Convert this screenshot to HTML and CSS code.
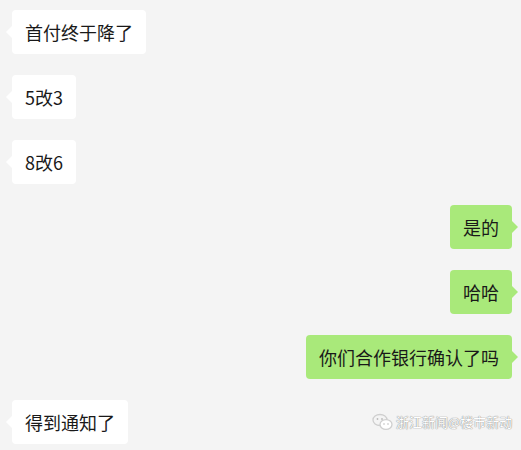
FILE: index.html
```html
<!DOCTYPE html>
<html lang="zh">
<head>
<meta charset="utf-8">
<link rel="stylesheet" href="styles.css">
</head>
<body>
<div class="chat">
  <div class="row left"><div class="bubble">首付终于降了</div></div>
  <div class="row left"><div class="bubble">5改3</div></div>
  <div class="row left"><div class="bubble">8改6</div></div>
  <div class="row right"><div class="bubble">是的</div></div>
  <div class="row right"><div class="bubble">哈哈</div></div>
  <div class="row right"><div class="bubble">你们合作银行确认了吗</div></div>
  <div class="row left"><div class="bubble">得到通知了</div></div>
</div>
<div class="watermark">
  <svg class="wm-icon" width="22" height="18" viewBox="0 0 22 18">
    <ellipse cx="8" cy="7" rx="7" ry="5.5" fill="none" stroke="#cfcfcf" stroke-width="1.3"/>
    <ellipse cx="14" cy="11.5" rx="6" ry="4.8" fill="#fff" stroke="#cfcfcf" stroke-width="1.3"/>
    <circle cx="5.5" cy="6" r="0.9" fill="#bbb"/>
    <circle cx="10" cy="6" r="0.9" fill="#bbb"/>
    <circle cx="12" cy="11" r="0.8" fill="#bbb"/>
    <circle cx="16" cy="11" r="0.8" fill="#bbb"/>
  </svg>
  <span class="wm-text">浙江新闻@楼市新动</span>
</div>
</body>
</html>
```
FILE: styles.css
```css
html, body {
  margin: 0;
  padding: 0;
  background: #f4f4f4;
  width: 521px;
  height: 450px;
  overflow: hidden;
  font-family: "Noto Sans CJK SC", "Noto Sans", sans-serif;
}
.chat {
  display: flex;
  flex-direction: column;
  gap: 21px;
  padding-top: 10px;
}
.row {
  display: flex;
}
.row.left {
  justify-content: flex-start;
  padding-left: 12px;
}
.row.right {
  justify-content: flex-end;
  padding-right: 9px;
}
.bubble {
  position: relative;
  height: 44px;
  box-sizing: border-box;
  padding: 10px 13px;
  font-size: 18px;
  line-height: 24px;
  color: #191919;
  border-radius: 4px;
  white-space: nowrap;
}
.left .bubble {
  background: #ffffff;
}
.right .bubble {
  background: #a9e97a;
}
.bubble::before {
  content: "";
  position: absolute;
  top: 16px;
  width: 0;
  height: 0;
  border-top: 6px solid transparent;
  border-bottom: 6px solid transparent;
}
.left .bubble::before {
  left: -6px;
  border-right: 6px solid #ffffff;
}
.right .bubble::before {
  right: -6px;
  border-left: 6px solid #a9e97a;
}
.watermark {
  position: absolute;
  left: 372px;
  top: 413px;
  display: flex;
  align-items: center;
  gap: 2px;
  white-space: nowrap;
}
.wm-text {
  font-size: 13px;
  line-height: 18px;
  color: #ffffff;
  text-shadow: 0 0 1px #888, 0 0 1px #888;
}
```
